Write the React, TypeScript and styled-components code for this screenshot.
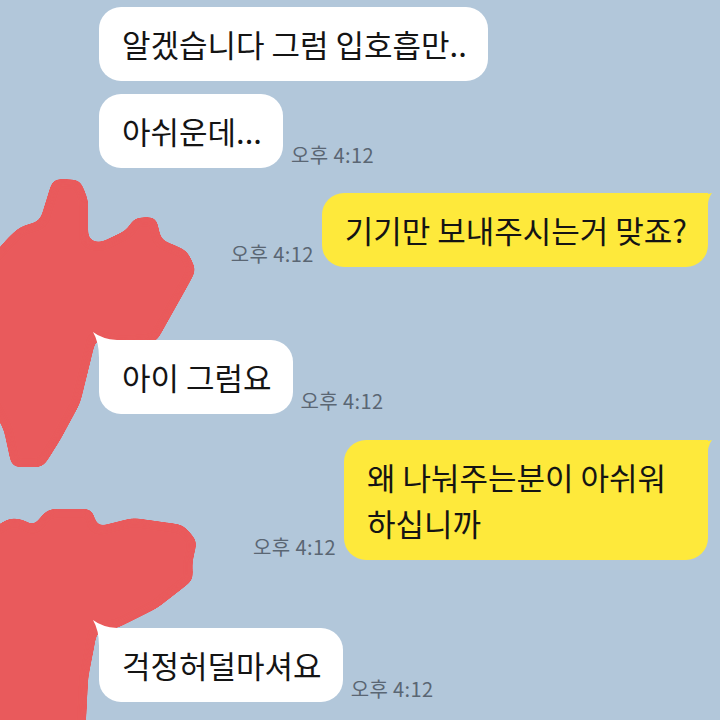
import React from "react";
import styled, { createGlobalStyle } from "styled-components";

type Msg = {
  id: number;
  mine: boolean;
  text: string;
  time?: string;
  tail?: boolean;
  gap: number;
  scribble?: "a" | "b";
};

const messages: Msg[] = [
  { id: 1, mine: false, text: "알겠습니다 그럼 입호흡만..", gap: 7 },
  { id: 2, mine: false, text: "아쉬운데...", time: "오후 4:12", gap: 13 },
  { id: 3, mine: true, text: "기기만 보내주시는거 맞죠?", time: "오후 4:12", tail: true, gap: 25 },
  { id: 4, mine: false, text: "아이 그럼요", time: "오후 4:12", tail: true, gap: 73, scribble: "a" },
  { id: 5, mine: true, text: "왜 나눠주는분이 아쉬워 하십니까", time: "오후 4:12", tail: true, gap: 26 },
  { id: 6, mine: false, text: "걱정허덜마셔요", time: "오후 4:12", tail: true, gap: 68, scribble: "b" },
];

const RED = "#e95a5b";

// marker blots drawn over the profile pictures
const blotA =
  "M53 179 L80 180 L88 200 L88 240 L100 243 L127 230 L134 218 L156 217 L161 240 L174 245 L187 251 L196 270 L188 285 L156 342 L118 345 L96 338 L80 403 L60 440 L43 467 L12 467 L4 430 L-20 383 L-20 270 L9 237 L20 227 L40 221 Z";
const blotB =
  "M50 511 L92 511 L97 529 L133 520 L183 527 L197 543 L192 565 L193 582 L157 610 L117 630 L97 633 L88 680 L85 740 L-20 740 L-20 538 L10 520 L25 522 L33 529 L45 514 Z";

function Scribble({ id, d, top, vy, h }: { id: string; d: string; top: number; vy: number; h: number }) {
  return (
    <Blot width="200" height={h} viewBox={`0 ${vy} 200 ${h}`} style={{ top }}>
      <defs>
        <filter id={id} x="-20%" y="-20%" width="140%" height="140%">
          <feGaussianBlur in="SourceGraphic" stdDeviation="5" result="b" />
          <feColorMatrix
            in="b"
            type="matrix"
            values="1 0 0 0 0  0 1 0 0 0  0 0 1 0 0  0 0 0 24 -11"
          />
        </filter>
      </defs>
      <path d={d} fill={RED} filter={`url(#${id})`} />
    </Blot>
  );
}

export default function App() {
  return (
    <>
      <GlobalStyle />
      <ChatRoom>
        {messages.map((m) => (
          <Row key={m.id} $mine={m.mine} $gap={m.gap}>
            {m.scribble === "a" && <Scribble id="blotA" d={blotA} top={-164} vy={176} h={294} />}
            {m.scribble === "b" && <Scribble id="blotB" d={blotB} top={-122} vy={508} h={214} />}
            {m.mine && m.time && <Time>{m.time}</Time>}
            <Bubble $mine={m.mine} $tail={!!m.tail} $wide={m.id === 5}>
              {m.text}
            </Bubble>
            {!m.mine && m.time && <Time>{m.time}</Time>}
          </Row>
        ))}
      </ChatRoom>
    </>
  );
}

const GlobalStyle = createGlobalStyle`
  html, body {
    margin: 0;
    padding: 0;
    background: #b2c7da;
  }
  body {
    font-family: "Noto Sans CJK KR", "Noto Sans", sans-serif;
  }
`;

const ChatRoom = styled.div`
  width: 720px;
  height: 720px;
  overflow: hidden;
  background: #b2c7da;
  display: flex;
  flex-direction: column;
  padding: 0 12px 0 99px;
  box-sizing: border-box;
`;

const Row = styled.div<{ $mine: boolean; $gap: number }>`
  position: relative;
  display: flex;
  align-items: flex-end;
  justify-content: ${(p) => (p.$mine ? "flex-end" : "flex-start")};
  gap: 8px;
  margin-top: ${(p) => p.$gap}px;
  flex-shrink: 0;
`;

const Blot = styled.svg`
  position: absolute;
  left: -99px;
  pointer-events: none;
  z-index: 0;
`;

const Bubble = styled.div<{ $mine: boolean; $tail: boolean; $wide: boolean }>`
  position: relative;
  z-index: 1;
  background: ${(p) => (p.$mine ? "#fee93b" : "#ffffff")};
  color: #141414;
  font-size: 31px;
  line-height: 46px;
  padding: 14px 21px 14px 23px;
  border-radius: 22px;
  ${(p) => p.$tail && (p.$mine ? "border-top-right-radius: 0;" : "border-top-left-radius: 4px;")}
  max-width: ${(p) => (p.$wide ? "320px" : "none")};
  white-space: ${(p) => (p.$wide ? "normal" : "nowrap")};
  word-break: keep-all;

  &::before {
    content: "";
    display: ${(p) => (p.$tail ? "block" : "none")};
    position: absolute;
    background: inherit;
    ${(p) =>
      p.$mine
        ? `
      top: 0;
      right: -4px;
      width: 16px;
      height: 18px;
      clip-path: path("M0 0 Q10 2 16 0 Q11 6 12 18 L0 18 Z");
    `
        : `
      top: -8px;
      left: -6px;
      width: 24px;
      height: 26px;
      clip-path: path("M0 0 Q9 7 24 8 L24 26 L6 26 Q6 10 0 0 Z");
    `}
  }
`;

const Time = styled.span`
  position: relative;
  z-index: 1;
  font-size: 20px;
  letter-spacing: 0.4px;
  line-height: 1;
  color: #5a6673;
  white-space: nowrap;
  padding-bottom: 3px;
`;
